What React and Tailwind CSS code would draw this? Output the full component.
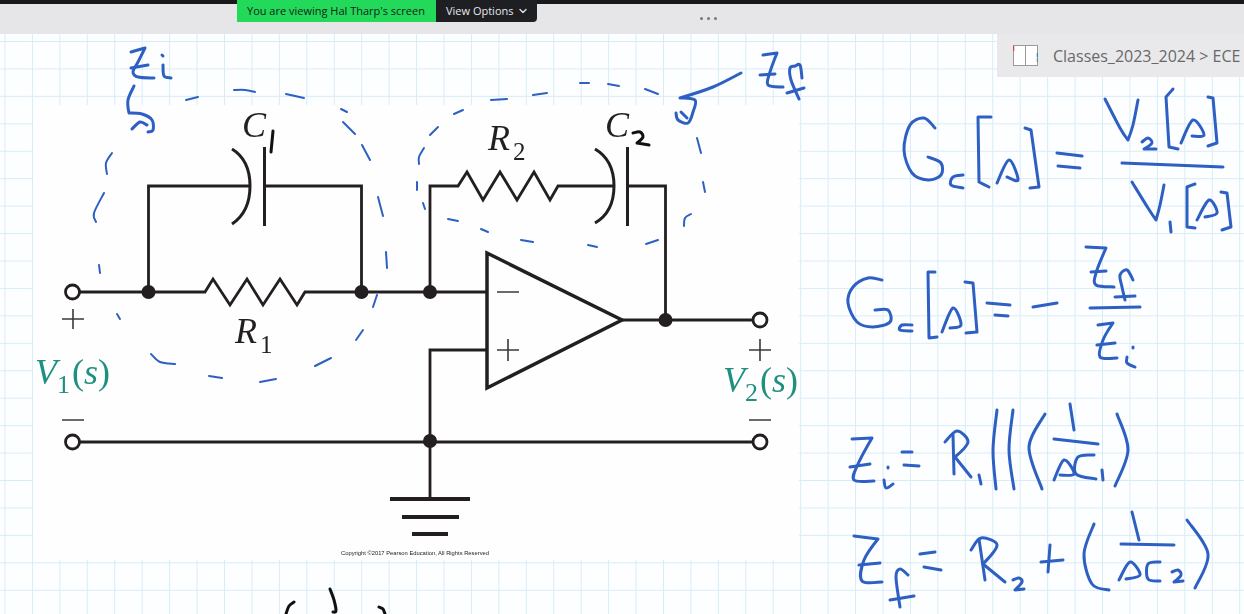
import React from 'react';
import { ChevronDown } from 'lucide-react';

// turn a list of points into a smooth pen stroke, a third value marks a sharp corner
const toPath = (pts) => {
  const tangent = (i) => {
    if (pts[i][2]) return [0, 0];
    const a = pts[i - 1] || pts[i];
    const b = pts[i + 1] || pts[i];
    return [(b[0] - a[0]) / 6, (b[1] - a[1]) / 6];
  };
  let d = `M${pts[0][0]} ${pts[0][1]}`;
  for (let i = 0; i < pts.length - 1; i++) {
    const t1 = tangent(i);
    const t2 = tangent(i + 1);
    d += ` C${pts[i][0] + t1[0]} ${pts[i][1] + t1[1]} ${pts[i + 1][0] - t2[0]} ${pts[i + 1][1] - t2[1]} ${pts[i + 1][0]} ${pts[i + 1][1]}`;
  }
  return d;
};

// dashed loops drawn by hand around the two impedances
const dashes = [
  [[186, 100], [198, 97]], [[234, 90], [245, 90], [255, 92]], [[286, 94], [304, 98]], [[341, 109], [347, 112]],
  [[343, 122], [355, 134]], [[362, 145], [370, 160]], [[378, 197], [383, 216]], [[386, 252], [387, 268]],
  [[377, 295], [373, 307]], [[363, 330], [356, 340]], [[331, 358], [315, 366]], [[276, 379], [260, 382]],
  [[222, 378], [209, 376]], [[151, 354], [160, 362], [175, 364]], [[120, 319], [117, 314]], [[100, 273], [99, 265]],
  [[104, 193], [94, 213], [96, 222]], [[112, 153], [106, 163], [107, 174]],
  [[463, 110], [454, 114]], [[438, 127], [430, 135]], [[424, 148], [419, 157], [419, 164]], [[417, 182], [417, 190]],
  [[423, 203], [425, 209]], [[448, 219], [458, 221]], [[481, 229], [488, 232]], [[521, 240], [533, 242]],
  [[588, 245], [597, 247]], [[646, 244], [658, 240]], [[684, 226], [685, 218], [691, 214]], [[703, 182], [705, 192]],
  [[697, 138], [701, 153]], [[491, 100], [507, 99]], [[533, 95], [547, 93]], [[580, 83], [589, 83]],
  [[608, 84], [619, 86]], [[645, 89], [658, 94]],
];

// handwriting, one list per pen stroke
const ink = [
  // zi and its arrow
  [[131, 52], [145, 48, 1], [138, 62], [133, 72], [138, 77], [154, 78]], [[131, 68], [148, 65]],
  [[162, 55], [163, 56]], [[163, 65], [164, 76], [171, 78]],
  [[134, 86], [128, 100], [129, 113, 1], [142, 114], [152, 120], [153, 130], [148, 132]], [[132, 129], [140, 122], [147, 125]],
  // zf and its arrow
  [[741, 73], [713, 87], [680, 98, 1], [695, 100], [693, 112], [688, 123], [678, 120], [676, 113]], [[681, 112], [687, 118]],
  [[763, 55], [777, 53, 1], [770, 72], [768, 85], [783, 87]], [[760, 75], [775, 74]],
  [[802, 78], [800, 65], [795, 66], [790, 68], [791, 80], [799, 99]], [[787, 93], [804, 88]],
  // Gc[s] = V2[s] / V1[s]
  [[935, 128], [924, 118], [910, 125], [904, 150], [912, 173], [928, 180], [941, 175], [941, 163], [928, 157]],
  [[963, 175], [953, 177], [951, 185], [963, 188]],
  [[991, 117], [978, 117, 1], [979, 182, 1], [989, 187]],
  [[997, 183], [1009, 160], [1018, 180], [1007, 177]],
  [[1025, 128], [1031, 130, 1], [1039, 187, 1], [1030, 188]],
  [[1057, 153], [1082, 156]], [[1058, 166], [1080, 168]],
  [[1105, 99], [1120, 128], [1128, 140, 1], [1133, 125], [1138, 100]],
  [[1142, 142], [1148, 138], [1152, 143], [1144, 149, 1], [1156, 149]],
  [[1173, 89], [1166, 97, 1], [1169, 147, 1], [1178, 149]],
  [[1181, 143], [1193, 120], [1204, 135], [1192, 136]],
  [[1208, 97], [1213, 98, 1], [1217, 143, 1], [1208, 146]],
  [[1122, 163], [1223, 167]],
  [[1132, 182], [1148, 208], [1156, 220, 1], [1160, 205], [1164, 185]],
  [[1170, 222], [1171, 232]],
  [[1195, 184], [1187, 187, 1], [1187, 227, 1], [1195, 228]],
  [[1197, 220], [1209, 200], [1217, 213], [1205, 217]],
  [[1221, 192], [1227, 193, 1], [1231, 227, 1], [1222, 230]],
  // Gc[s] = - zf / zi
  [[882, 280], [868, 278], [853, 287], [848, 303], [857, 322], [873, 327], [890, 322], [888, 310], [875, 310]],
  [[912, 325], [902, 325], [900, 330], [912, 331]],
  [[935, 272], [928, 272, 1], [929, 338, 1], [937, 337]],
  [[942, 332], [953, 308], [961, 325], [950, 328]],
  [[965, 282], [973, 283, 1], [977, 332, 1], [966, 333]],
  [[987, 303], [1010, 305]], [[995, 315], [1008, 316]],
  [[1033, 307], [1057, 303]],
  [[1090, 308], [1140, 307]],
  [[1086, 247], [1106, 248, 1], [1096, 273], [1096, 285], [1114, 287]], [[1091, 272], [1106, 271]],
  [[1133, 280], [1127, 270], [1120, 275], [1122, 287], [1125, 300]], [[1115, 297], [1135, 296]],
  [[1098, 325], [1113, 323, 1], [1103, 340], [1100, 357], [1117, 358]], [[1097, 345], [1115, 343]],
  [[1133, 347], [1133, 348]], [[1127, 357], [1127, 363], [1135, 367]],
  // Zi = R1 || (1 / sC1)
  [[852, 439], [872, 438, 1], [858, 464], [854, 480], [874, 481]], [[850, 467], [870, 464]],
  [[884, 480], [886, 488], [893, 484]], [[888, 467], [888, 468]],
  [[902, 452], [912, 452]], [[904, 465], [919, 466]],
  [[953, 435], [954, 474]], [[945, 442], [957, 431], [968, 442], [955, 457, 1], [971, 477]],
  [[979, 475], [981, 484]],
  [[997, 410], [993, 450], [996, 489]], [[1013, 410], [1009, 450], [1014, 489]],
  [[1045, 414], [1029, 447], [1042, 489]],
  [[1070, 404], [1074, 430]],
  [[1054, 439], [1098, 444]],
  [[1054, 480], [1064, 460], [1074, 474], [1060, 475]],
  [[1094, 455], [1078, 457], [1076, 474], [1096, 479]],
  [[1102, 470], [1103, 480]],
  [[1117, 414], [1128, 450], [1115, 486]],
  // Zf = R2 + (1 / sC2)
  [[854, 536], [878, 539, 1], [864, 560], [862, 581], [882, 582]], [[859, 565], [880, 563]],
  [[908, 575], [900, 569], [896, 577], [900, 607]], [[890, 600], [914, 596]],
  [[920, 554], [935, 552]], [[924, 567], [941, 570]],
  [[979, 539], [985, 580]], [[971, 550], [981, 538], [997, 545], [983, 564, 1], [1005, 582]],
  [[1013, 580], [1019, 578], [1022, 582], [1015, 590, 1], [1024, 589]],
  [[1041, 562], [1063, 560]], [[1050, 545], [1048, 572]],
  [[1094, 524], [1084, 554], [1092, 584], [1109, 590]],
  [[1132, 512], [1139, 540]],
  [[1121, 544], [1174, 545]],
  [[1119, 580], [1130, 562], [1140, 575], [1126, 579]],
  [[1160, 562], [1148, 564], [1148, 579], [1160, 581]],
  [[1172, 572], [1178, 570], [1181, 575], [1174, 582, 1], [1183, 581]],
  [[1187, 520], [1208, 554], [1195, 588]],
];

const blackInk = [
  [[273, 131], [271, 152]],
  [[633, 133], [640, 132], [643, 137], [637, 143, 1], [649, 145]],
  [[294, 602], [289, 606], [286, 614]], [[330, 589], [334, 600], [336, 611], [333, 612]], [[379, 607], [383, 609], [385, 614]],
];

const Circuit = () => (
  <g fill="none" stroke="#231f20" strokeWidth="2.8">
    {/* input branch with R1 and C1 */}
    <path d="M80 292H205L213 279L230 305L247 279L263 305L280 279L297 305L305 292H487" />
    <path d="M148.5 292V186H250M264.5 186H361.5V292" />
    <path d="M232 149Q250 160 250 186Q250 212 232 224" strokeWidth="3" />
    <path d="M264.5 147V226" strokeWidth="3" />
    {/* feedback branch with R2 and C2 */}
    <path d="M430 292V186H458L467 172L483 200L500 172L517 200L534 172L550 200L558 186H613M627.5 186H665.5V320" />
    <path d="M595 149Q614 160 614 186Q614 212 595 223" strokeWidth="3" />
    <path d="M627.5 147V226" strokeWidth="3" />
    {/* op amp */}
    <path d="M487 253L622 320L487 388Z" strokeWidth="3.5" />
    <path d="M622 320H752M487 350H430V499M80 442H752" />
    {/* ground */}
    <path d="M390 499H470" strokeWidth="4" />
    <path d="M402 517H459" strokeWidth="4" />
    <path d="M412 534H448" strokeWidth="4" />
    {/* terminals */}
    {[[72.5, 292], [72.5, 442], [760, 320], [760, 442]].map(([cx, cy]) => (
      <ellipse key={`${cx}-${cy}`} cx={cx} cy={cy} rx="7" ry="7" fill="#fff" strokeWidth="2.8" />
    ))}
    {[[148.5, 292], [361.5, 292], [430, 292], [665.5, 320], [430, 441]].map(([cx, cy]) => (
      <circle key={`${cx}-${cy}`} cx={cx} cy={cy} r="7" fill="#231f20" stroke="none" />
    ))}
    {/* signs */}
    <path d="M62 319H84M73 309V329M62 420H84M749 350H771M760 339V361M749 420H771M497 292H519M497 350H519M508 339V361" stroke="#3a3a3a" strokeWidth="1.6" />
  </g>
);

const Labels = () => (
  <g className="font-['Liberation_Serif']">
    <g className="fill-[#231f20]">
      <text x="242" y="137" fontSize="36" fontStyle="italic">C</text>
      <text x="605" y="137" fontSize="36" fontStyle="italic">C</text>
      <text x="488" y="150" fontSize="36" fontStyle="italic">R</text>
      <text x="513" y="160" fontSize="25">2</text>
      <text x="235" y="343" fontSize="36" fontStyle="italic">R</text>
      <text x="260" y="353" fontSize="25">1</text>
    </g>
    <g className="fill-[#1f9080]">
      <text x="35" y="384" fontSize="36" fontStyle="italic">V</text>
      <text x="57" y="393" fontSize="26">1</text>
      <text x="72" y="384" fontSize="36">(<tspan fontStyle="italic">s</tspan>)</text>
      <text x="723" y="392" fontSize="36" fontStyle="italic">V</text>
      <text x="745" y="401" fontSize="26">2</text>
      <text x="760" y="392" fontSize="36">(<tspan fontStyle="italic">s</tspan>)</text>
    </g>
    <text x="341" y="555" fontSize="5.8" className="fill-[#222] font-['Liberation_Sans']">
      Copyright ©2017 Pearson Education, All Rights Reserved
    </text>
  </g>
);

const App = () => {
  return (
    <div className="relative flex h-screen w-full flex-col overflow-hidden bg-white font-['Open_Sans',sans-serif]">
      <div className="h-[4px] bg-[#19191b]" />

      {/* viewing bar */}
      <div className="flex h-[30px] items-start bg-[#e6e6e8] pl-[700px] pt-[13px]">
        <div className="flex gap-[4px]">
          <span className="h-[3px] w-[3px] rounded-full bg-[#77777a]" />
          <span className="h-[3px] w-[3px] rounded-full bg-[#77777a]" />
          <span className="h-[3px] w-[3px] rounded-full bg-[#77777a]" />
        </div>
      </div>
      <div className="absolute left-[237px] top-0 flex h-[22px] text-[11px] leading-[22px]">
        <div className="w-[199px] bg-[#23d959] pl-[10px] text-[#10261a]">You are viewing Hal Tharp's screen</div>
        <div className="flex w-[101px] items-center gap-[4px] rounded-br-[4px] bg-[#1e1f23] pl-[10px] text-[#e8e8ea]">
          View Options
          <ChevronDown size={12} strokeWidth={2.5} />
        </div>
      </div>

      {/* whiteboard */}
      <div className="relative flex-1 bg-[#fdfeff] bg-[linear-gradient(to_right,#d8ecf6_1px,transparent_1px),linear-gradient(to_bottom,#d8ecf6_1px,transparent_1px)] bg-[size:27.45px_27.45px] bg-[position:4.5px_7px]">
        <div className="absolute left-[33px] top-[71px] h-[455px] w-[766px] bg-[#fefefe]" />
        <svg className="absolute inset-0 blur-[0.5px]" width="1244" height="580" viewBox="0 34 1244 580">
          <Circuit />
          <Labels />
          <g fill="none" stroke="#2d60c2" strokeLinecap="round" strokeLinejoin="round">
            {dashes.map((pts, i) => (
              <path key={i} d={toPath(pts)} strokeWidth="2" />
            ))}
            {ink.map((pts, i) => (
              <path key={i} d={toPath(pts)} strokeWidth="3" />
            ))}
          </g>
          <g fill="none" stroke="#111" strokeWidth="3" strokeLinecap="round" strokeLinejoin="round">
            {blackInk.map((pts, i) => (
              <path key={i} d={toPath(pts)} />
            ))}
          </g>
        </svg>

        {/* notebook breadcrumb */}
        <div className="absolute right-0 top-0 flex h-[43px] w-[247px] items-center gap-[15px] bg-[#e9e9eb] pl-[16px] text-[16px] text-[#68686a]">
          <svg width="25" height="22" viewBox="0 0 25 22">
            <rect x="0.5" y="0.5" width="24" height="20" fill="#fff" stroke="#9a9a9a" />
            <path d="M12.5 1V21" stroke="#9a9a9a" />
            <path d="M0.5 1V6" stroke="#d8442a" strokeWidth="1.5" />
            <path d="M24.5 8V12" stroke="#3f7fb5" strokeWidth="1.5" />
            <path d="M24.5 13V17" stroke="#5d9a86" strokeWidth="1.5" />
          </svg>
          <span className="whitespace-nowrap">Classes_2023_2024 &gt; ECE</span>
        </div>
      </div>
    </div>
  );
};

export default App;
